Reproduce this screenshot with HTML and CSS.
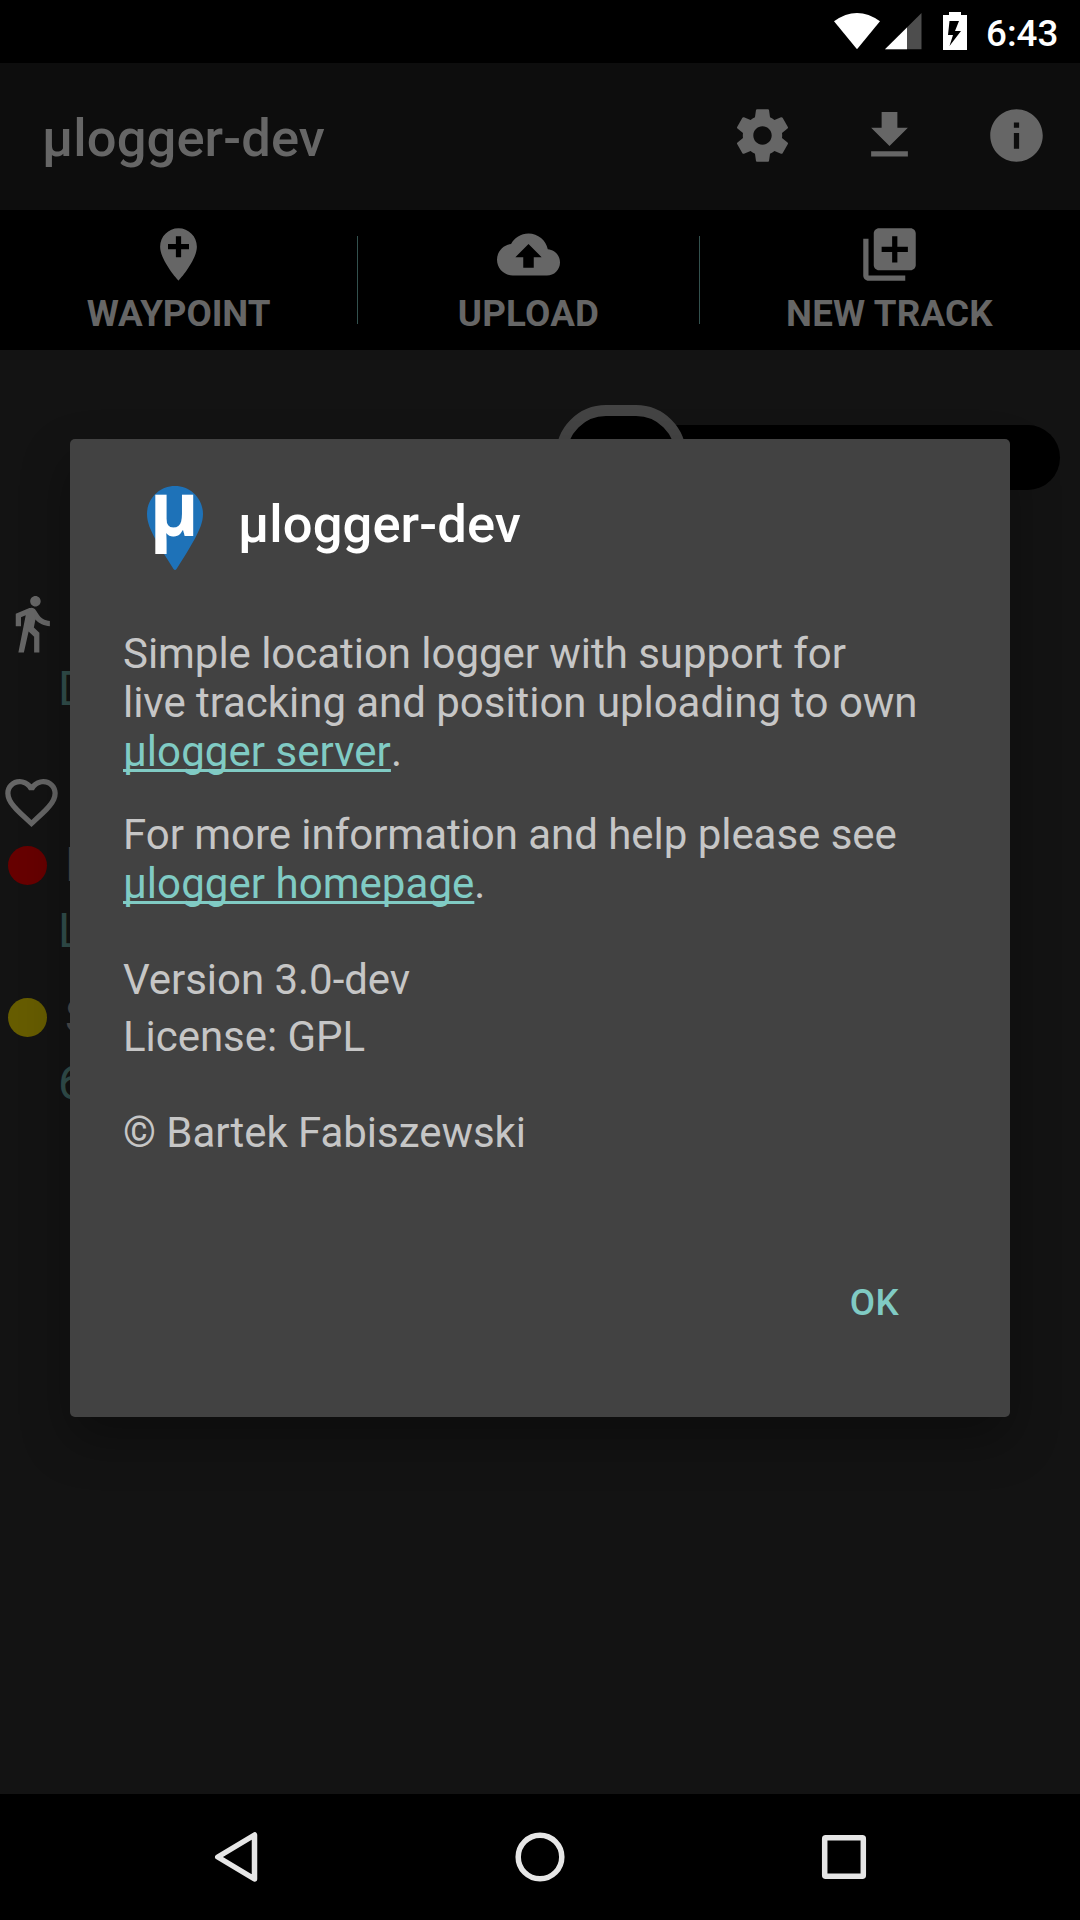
FILE: index.html
```html
<!DOCTYPE html>
<html lang="en">
<head>
<meta charset="utf-8">
<title>µlogger-dev</title>
<link rel="stylesheet" href="styles.css">
</head>
<body>
<div class="screen">
  <header class="status-bar">
    <svg class="status-icons" width="140" height="63" viewBox="0 0 140 63">
      <path fill="#fff" d="M6 21.3Q29 4.700 52 21.300L29 49.300z"/>
      <path fill="#4d4d4d" d="M93.500 13V49.300H57z"/>
      <path fill="#fff" d="M79 27.500V49.300H57z"/>
      <path fill="#fff" fill-rule="evenodd" d="M121 12h12v3h6v35h-24V15h6zM121.500 21l-1.500 14h5l-3.500 11 11.500-15h-6l4-10z"/>
    </svg>
    <span class="clock">6:43</span>
  </header>

  <div class="app-bar">
    <h1 class="app-title">µlogger-dev</h1>
    <svg class="icon" viewBox="0 0 24 24"><path d="M19.430 12.980c.040-.320.070-.640.070-.980s-.030-.660-.070-.980l2.110-1.650c.190-.150.240-.420.120-.640l-2-3.460c-.120-.220-.390-.300-.610-.220l-2.490 1c-.520-.400-1.080-.730-1.690-.980l-.380-2.650C14.460 2.180 14.250 2 14 2h-4c-.250 0-.460.180-.490.420l-.380 2.650c-.610.250-1.170.590-1.690.980l-2.490-1c-.230-.090-.490 0-.610.220l-2 3.460c-.130.220-.070.490.120.640l2.110 1.650c-.040.320-.070.650-.070.980s.030.660.070.980l-2.110 1.650c-.190.150-.240.420-.120.640l2 3.460c.120.220.390.300.610.220l2.490-1c.520.400 1.080.730 1.690.980l.380 2.650c.030.240.240.420.490.420h4c.250 0 .460-.180.490-.420l.380-2.650c.610-.250 1.170-.590 1.690-.980l2.490 1c.230.090.490 0 .610-.220l2-3.460c.120-.220.070-.490-.120-.640l-2.110-1.650zM12 15.500c-1.930 0-3.500-1.570-3.500-3.500s1.570-3.500 3.500-3.500 3.500 1.570 3.500 3.500-1.570 3.500-3.500 3.500z"/></svg>
    <svg class="icon" viewBox="0 0 24 24"><path d="M19 9h-4V3H9v6H5l7 7 7-7zM5 18v2h14v-2H5z"/></svg>
    <svg class="icon" viewBox="0 0 24 24"><path d="M12 2C6.480 2 2 6.480 2 12s4.480 10 10 10 10-4.480 10-10S17.520 2 12 2zm1 15h-2v-6h2v6zm0-8h-2V7h2v2z"/></svg>
  </div>

  <nav class="actions">
    <div class="action">
      <svg class="icon" viewBox="0 0 24 24"><path d="M12 2C8.140 2 5 5.140 5 9c0 5.250 7 13 7 13s7-7.750 7-13c0-3.860-3.140-7-7-7zm4 8h-3v3h-2v-3H8V8h3V5h2v3h3v2z"/></svg>
      <span>WAYPOINT</span>
    </div>
    <div class="divider"></div>
    <div class="action action-wide">
      <svg class="icon" viewBox="0 0 24 24"><path d="M19.350 10.040C18.670 6.590 15.640 4 12 4 9.110 4 6.600 5.640 5.350 8.040 2.340 8.360 0 10.910 0 14c0 3.310 2.690 6 6 6h13c2.760 0 5-2.240 5-5 0-2.640-2.050-4.780-4.650-4.960zM14 13v4h-4v-4H7l5-5 5 5h-3z"/></svg>
      <span>UPLOAD</span>
    </div>
    <div class="divider"></div>
    <div class="action action-wide">
      <svg class="icon" viewBox="0 0 24 24"><path d="M4 6H2v14c0 1.100.900 2 2 2h14v-2H4V6zm16-4H8c-1.100 0-2 .900-2 2v12c0 1.100.900 2 2 2h12c1.100 0 2-.900 2-2V4c0-1.100-.900-2-2-2zm-1 9h-4v4h-2v-4H9V9h4V5h2v4h4v2z"/></svg>
      <span>NEW TRACK</span>
    </div>
  </nav>

  <main class="content">
    <div class="switch"><div class="thumb"></div></div>
    <svg class="icon walk" viewBox="0 0 24 24"><path d="M13.500 5.500c1.100 0 2-.900 2-2s-.900-2-2-2-2 .900-2 2 .900 2 2 2zM9.800 8.900L7 23h2.100l1.800-8 2.100 2v6h2v-7.500l-2.100-2 .600-3C14.800 12 16.800 13 19 13v-2c-1.900 0-3.500-1-4.300-2.400l-1-1.600c-.400-.600-1-1-1.700-1-.300 0-.500.100-.800.100L6 8.300V13h2V9.600l1.800-.7"/></svg>
    <div class="value value-track">D</div>
    <svg class="icon heart" viewBox="0 0 24 24"><path d="M16.500 3c-1.740 0-3.410.810-4.500 2.090C10.910 3.810 9.240 3 7.500 3 4.420 3 2 5.420 2 8.500c0 3.780 3.400 6.860 8.550 11.540L12 21.350l1.450-1.320C18.600 15.360 22 12.280 22 8.500 22 5.420 19.580 3 16.500 3zm-4.400 15.550l-.100.100-.100-.100C7.140 14.240 4 11.390 4 8.500 4 6.500 5.500 5 7.500 5c1.540 0 3.040.990 3.570 2.360h1.870C13.460 5.990 14.960 5 16.500 5c2 0 3.500 1.500 3.500 3.500 0 2.890-3.140 5.740-7.900 10.050z"/></svg>
    <div class="status-row"><i class="led led-red"></i><span>L</span></div>
    <div class="value value-location">L</div>
    <div class="status-row"><i class="led led-yellow"></i><span>S</span></div>
    <div class="value value-sync">6</div>
  </main>

  <footer class="nav-bar">
    <svg width="1080" height="126" viewBox="0 0 1080 126" fill="none" stroke="#e6e6e6" stroke-width="5.500" stroke-linejoin="round">
      <path d="M254.500 41v44L217.800 63z"/>
      <circle cx="540" cy="63" r="21.800"/>
      <rect x="824.700" y="43.700" width="38.600" height="38.600" rx="1"/>
    </svg>
  </footer>

  <section class="dialog">
    <div class="dialog-header">
      <svg class="logo" width="56" height="84" viewBox="0 0 56 84">
        <path fill="#1e72b8" d="M28 0C12.500 0 0 12.500 0 28C0 37 4 44.500 8 52.500Q16 67 26.500 83Q28 85 29.500 83Q40 67 48 52.500C52 44.500 56 37 56 28C56 12.500 43.500 0 28 0z"/>
        <text class="logo-letter" x="2.500" y="49.700">µ</text>
      </svg>
      <h2 class="dialog-title">µlogger-dev</h2>
    </div>
    <p>Simple location logger with support for<br>live tracking and position uploading to own<br><a>µlogger server</a>.</p>
    <p class="more">For more information and help please see<br><a>µlogger homepage</a>.</p>
    <p class="version">Version 3.0-dev</p>
    <p class="license">License: GPL</p>
    <p class="copyright">© Bartek Fabiszewski</p>
    <div class="ok">OK</div>
  </section>
</div>
</body>
</html>
```

FILE: styles.css
```css
* { box-sizing: border-box; }

body {
  margin: 0;
  background: #131313;
  font-family: Roboto, "Noto Sans", sans-serif;
}

h1, h2, p { margin: 0; }

.screen {
  position: relative;
  display: flex;
  flex-direction: column;
  width: 1080px;
  height: 1920px;
  overflow: hidden;
}

.icon {
  display: block;
  flex: none;
  width: 63px;
  height: 63px;
  fill: #666;
}

.status-bar {
  display: flex;
  justify-content: flex-end;
  height: 63px;
  padding-right: 21px;
  background: #000;
}

.status-icons { margin-right: 18px; }

.clock {
  width: 73px;
  color: #fff;
  font-size: 36.75px;
  font-weight: 500;
  line-height: 67px;
}

.app-bar {
  display: flex;
  align-items: center;
  gap: 64px;
  height: 147px;
  padding: 0 32px 2px 42px;
  background: #0d0d0d;
}

.app-title {
  flex: 1;
  padding-top: 5px;
  color: #666;
  font-size: 52.5px;
  font-weight: 500;
  letter-spacing: .1px;
  line-height: 62px;
}

.actions {
  display: grid;
  grid-template-columns: 357px 1px 341px 1px 379px;
  height: 140px;
  background: #000;
}

.action {
  display: flex;
  flex-direction: column;
  align-items: center;
  padding-top: 13px;
  color: #666;
  font-size: 36.75px;
  font-weight: 700;
  letter-spacing: -.1px;
  line-height: 43px;
  white-space: nowrap;
}

.action-wide { letter-spacing: .2px; }

.action span { margin-top: 6px; }

.divider {
  height: 88px;
  margin-top: 26px;
  background: #33514e;
}

.content {
  flex: 1;
  padding-top: 75px;
}

.switch {
  display: flex;
  align-items: center;
  width: 504px;
  height: 65px;
  margin-left: 556px;
  border-radius: 33px;
  background: #000;
}

.thumb {
  flex: none;
  width: 130px;
  height: 105px;
  border: 11px solid #444;
  border-radius: 50px;
  background: #000;
}

.walk { margin-top: 102px; }

.value {
  padding-left: 58px;
  color: #33514e;
  font-size: 47.25px;
  line-height: 56px;
}

.value-track { margin-top: 6px; }

.heart { margin-top: 54px; }

.status-row {
  display: flex;
  align-items: center;
  gap: 18px;
  height: 56px;
  padding-left: 8px;
  color: #4d4d4d;
  font-size: 47.25px;
  line-height: 56px;
}

.heart + .status-row { margin-top: 3px; }

.led {
  width: 39px;
  height: 39px;
  border-radius: 50%;
}

.led-red { background: #600; }
.led-yellow { background: #665c00; }

.value-location { margin-top: 10px; }
.value-location + .status-row { margin-top: 30px; }
.value-sync { margin-top: 10px; }

.nav-bar {
  height: 126px;
  background: #000;
}

.nav-bar svg { display: block; }

/* Modal window, floating over the dimmed main view */
.dialog {
  position: absolute;
  top: 439px;
  left: 70px;
  width: 940px;
  height: 978px;
  padding: 47px 53px 0;
  border-radius: 5px;
  background: #424242;
  box-shadow: 0 22px 50px rgba(0, 0, 0, .32);
  color: #c6c6c6;
  font-size: 42px;
  letter-spacing: -.04px;
  line-height: 49px;
  white-space: nowrap;
}

.dialog-header {
  display: flex;
  gap: 35px;
  height: 143px;
  padding-left: 24px;
}

.logo { overflow: visible; }

.logo-letter {
  fill: #fff;
  font-family: "Open Sans", sans-serif;
  font-size: 75px;
  font-weight: 700;
}

.dialog-title {
  padding-top: 7px;
  color: #fff;
  font-size: 52.5px;
  font-weight: 500;
  letter-spacing: .1px;
  line-height: 62px;
}

.dialog a {
  color: #80cbc4;
  letter-spacing: .05px;
  text-decoration: underline;
  text-decoration-thickness: 3px;
  text-decoration-skip-ink: none;
  text-underline-offset: 3px;
}

.more { margin-top: 34px; }
.version { margin-top: 47px; }
.license { margin-top: 8px; }
.copyright { margin-top: 47px; }

.ok {
  margin: 124px 58px 0 0;
  color: #80cbc4;
  font-size: 36.75px;
  font-weight: 500;
  letter-spacing: .4px;
  line-height: 43px;
  text-align: right;
}
```
